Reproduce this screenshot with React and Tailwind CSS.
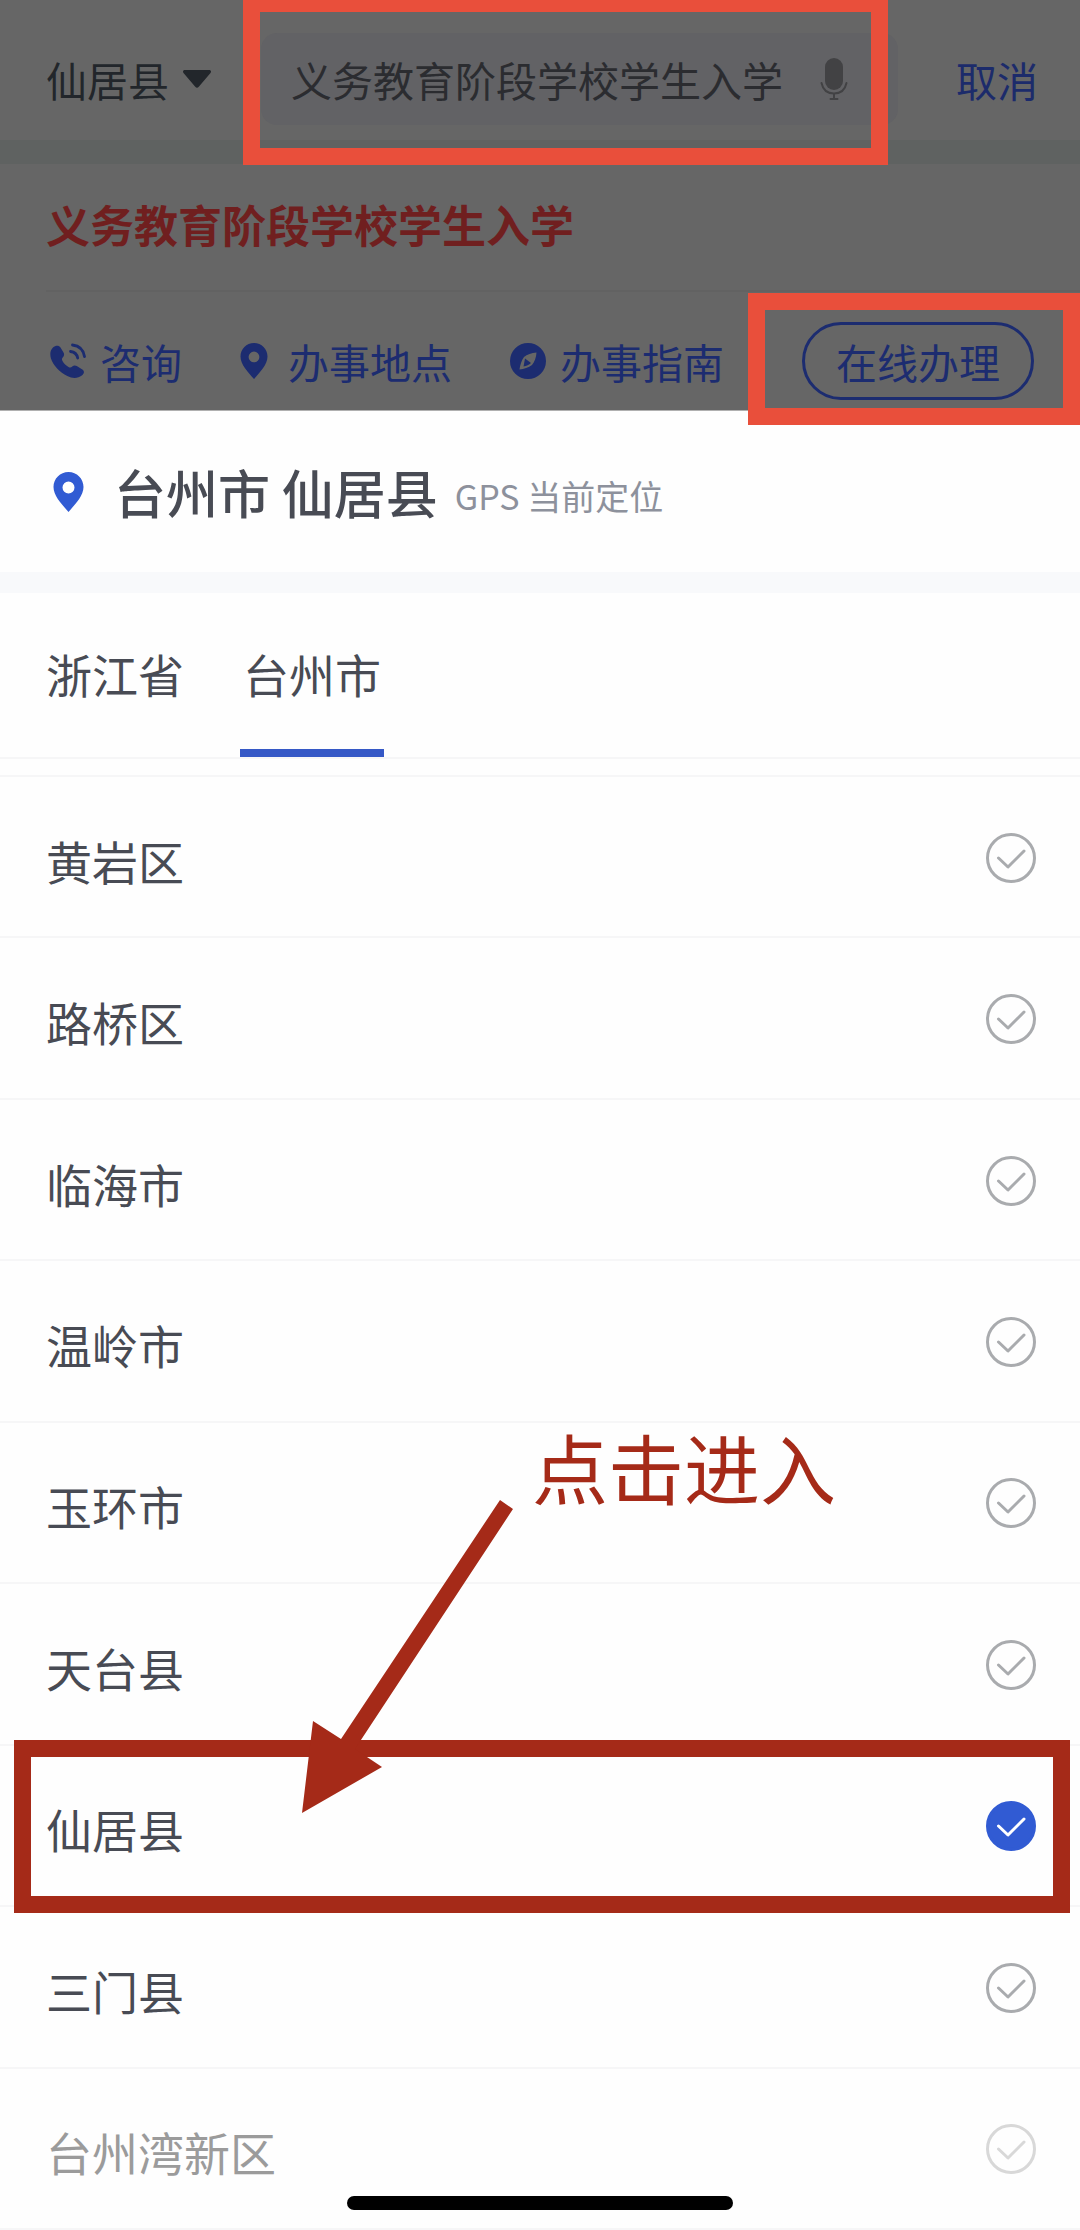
import { useState } from 'react';

const areas = [
  { name: '黄岩区' },
  { name: '路桥区' },
  { name: '临海市' },
  { name: '温岭市' },
  { name: '玉环市' },
  { name: '天台县' },
  { name: '仙居县' },
  { name: '三门县' },
  { name: '台州湾新区', faded: true },
];

const PinIcon = ({ className }) => (
  <svg viewBox="0 0 30 40" className={className} fill="currentColor" aria-hidden="true">
    <path
      fillRule="evenodd"
      d="M15 0C6.6 0 0 6.700 0 15c0 9 8.500 17.500 15 25 6.500-7.500 15-16 15-25C30 6.700 23.400 0 15 0Zm0 9.500a6 6 0 1 1 0 12 6 6 0 0 1 0-12Z"
    />
  </svg>
);

const PhoneIcon = ({ className }) => (
  <svg viewBox="0 0 36 36" className={className} aria-hidden="true">
    <path
      fill="currentColor"
      d="M3 4.500C5.500 2 9 2 10.500 4.500l3 5c1 1.700.7 3.300-.6 4.700-1.200 1.300-1.200 2.300-.4 3.800 1.500 2.700 3.500 4.600 6 6 1.500.8 2.600.7 3.700-.4 1.400-1.300 3-1.600 4.600-.6l5.500 3.400c2.500 1.600 2 4.300-.5 6.200-4 3-9.500 3-14.500.4C10 29.500 3 22.500.8 15-.2 10.500.3 7 3 4.500Z"
    />
    <g fill="none" stroke="currentColor" strokeWidth="2.800" strokeLinecap="round">
      <path d="M22.500 2c6.500.8 11 5 12 11.500" />
      <path d="M20.500 8.500c4 .5 6.500 2.800 7.200 6.500" />
    </g>
  </svg>
);

const CompassIcon = ({ className }) => (
  <svg viewBox="0 0 36 36" className={className} fill="currentColor" aria-hidden="true">
    <path
      fillRule="evenodd"
      d="M18 0a18 18 0 1 1 0 36 18 18 0 0 1 0-36Zm8.500 9.500c-5 .3-9.500 2-12.500 4.500-2.500 3.500-4 8-4.500 12.500 4.500-.5 9-2 12.500-4.500 2.500-3 4.200-7.500 4.500-12.500Z"
    />
    <path d="M15 15.500l6 4.500c-2 1.800-4.500 3-7.500 3.500Z" />
  </svg>
);

const MicIcon = ({ className }) => (
  <svg viewBox="0 0 28 42" className={className} aria-hidden="true">
    <rect x="5" y="0" width="18" height="32" rx="9" fill="currentColor" />
    <path
      d="M1.500 25c1.500 7 6 10.500 12.500 10.500S25 32 26.500 25M14 35.500V41M10.500 41h7"
      fill="none"
      stroke="currentColor"
      strokeWidth="2"
      strokeLinecap="round"
    />
  </svg>
);

const CheckCircle = ({ selected, faded }) => {
  const color = selected ? 'text-[#315bd3]' : faded ? 'text-[#d8d8d8]' : 'text-[#a9abae]';
  return (
    <svg viewBox="0 0 50 50" className={`size-[50px] shrink-0 ${color}`} fill="none" aria-hidden="true">
      <circle cx="25" cy="25" r="23.500" stroke="currentColor" strokeWidth="3" fill={selected ? 'currentColor' : 'none'} />
      <path
        d="M12.500 25l9.500 9L38 18"
        stroke={selected ? '#fff' : 'currentColor'}
        strokeWidth="3"
        strokeLinecap="round"
        strokeLinejoin="round"
      />
    </svg>
  );
};

// Red hint with the arrow that points at the selected row
const ClickHint = () => (
  <div className="pointer-events-none absolute bottom-full left-[300px] z-10 text-[#a52a18]">
    <svg viewBox="0 0 214 314" className="absolute left-0 top-[84px] h-[314px] w-[214px]" fill="currentColor" aria-hidden="true">
      <path d="M200 0l13 9L55 249l27 18-80 46L13 221l28 18Z" />
    </svg>
    <p className="mb-[230px] ml-[232px] whitespace-nowrap text-[76px] leading-[100px]">点击进入</p>
  </div>
);

const AreaRow = ({ area, selected, onSelect }) => (
  <li className="relative flex min-h-[120px] flex-1 border-b-2 border-[#f6f6f7]">
    <button
      type="button"
      aria-pressed={selected}
      onClick={() => onSelect(area.name)}
      className="flex flex-1 items-center justify-between pl-[46px] pr-[44px] pt-[2px] text-left"
    >
      <span className={`pt-1 text-[46px] leading-[68px] ${area.faded ? 'text-[#9b9b9b]' : 'text-[#484b54]'}`}>
        {area.name}
      </span>
      <CheckCircle selected={selected} faded={area.faded} />
    </button>
    {selected && (
      <>
        <div className="pointer-events-none absolute -bottom-2 -top-1.5 left-[14px] right-[10px] border-[17px] border-[#a52a18]" />
        <ClickHint />
      </>
    )}
  </li>
);

const ServiceHeader = () => (
  <div className="bg-[#666666]">
    <div className="flex h-[140px] items-center pb-[16px] pt-[34px]">
      <button type="button" className="ml-[46px] flex shrink-0 items-center gap-[14px] text-[41px] leading-[60px] text-[#22262b]">
        仙居县
        <svg viewBox="0 0 28 18" className="h-[18px] w-[28px]" fill="currentColor" aria-hidden="true">
          <path d="M2 0h24c2 0 2.500 1.500 1.500 3L16 16.500c-1.500 1.800-2.500 1.800-4 0L.500 3C-.500 1.500 0 0 2 0Z" />
        </svg>
      </button>
      <div className="relative ml-[50px] flex h-[92px] flex-1 items-center rounded-2xl bg-[#626265] pl-[30px] pr-[50px]">
        <input
          type="text"
          aria-label="搜索"
          defaultValue="义务教育阶段学校学生入学"
          className="min-w-0 flex-1 bg-transparent text-[41px] leading-[60px] text-[#2b2c30] outline-none"
        />
        <button type="button" aria-label="语音输入" className="text-[#424244]">
          <MicIcon className="h-[42px] w-[28px]" />
        </button>
        <div className="pointer-events-none absolute -bottom-[40px] -left-[18px] -top-[38px] right-[10px] border-[17px] border-[#e94f3b]" />
      </div>
      <button type="button" className="ml-[58px] mr-[42px] shrink-0 text-[41px] leading-[60px] text-[#1c2b6b]">
        取消
      </button>
    </div>
    <div className="h-6 bg-[#5f6261]" />
    <h1 className="ml-[46px] border-b-2 border-[#626262] pb-[34px] pt-[28px] text-[44px] font-bold leading-[64px] text-[#701f1f]">
      义务教育阶段学校学生入学
    </h1>
    <div className="flex h-[118px] items-center justify-between pl-[50px] pt-5 text-[41px] leading-[60px] text-[#1c2c70]">
      <a href="#consult" className="flex items-center gap-[14px]">
        <PhoneIcon className="size-9" />
        咨询
      </a>
      <a href="#place" className="flex items-center gap-5">
        <PinIcon className="h-[36px] w-[28px]" />
        办事地点
      </a>
      <a href="#guide" className="flex items-center gap-[14px]">
        <CompassIcon className="size-9" />
        办事指南
      </a>
      <div className="relative pl-5 pr-[46px]">
        <button type="button" className="h-[78px] rounded-full border-[3px] border-current px-[31px]">
          在线办理
        </button>
        <div className="pointer-events-none absolute -bottom-[25px] -left-[34px] -top-[29px] right-0 border-[17px] border-[#e94f3b]" />
      </div>
    </div>
  </div>
);

export default function App() {
  const [selected, setSelected] = useState('仙居县');

  return (
    <div className="relative flex min-h-screen flex-col bg-[#fefefe] font-['Noto_Sans_CJK_SC',sans-serif]">
      <ServiceHeader />

      <div className="flex h-[162px] items-center border-t border-[#b0b0b0] pl-[53px]">
        <PinIcon className="h-[40px] w-[31px] text-[#315bd3]" />
        <p className="ml-[30px] text-[52px] font-medium leading-[76px] text-[#484b54]">台州市 仙居县</p>
        <p className="ml-[17px] pt-2 text-[34px] leading-[50px] text-[#8d919c]">GPS 当前定位</p>
      </div>
      <div className="h-[21px] bg-[#f8f9fb]" />

      <nav className="flex h-[166px] gap-[56px] border-b-2 border-[#f6f6f7] pl-[46px] text-[46px] leading-[68px] text-[#484b54]">
        <button type="button" className="border-b-[8px] border-transparent pt-1">浙江省</button>
        <button type="button" className="border-b-[8px] border-[#3558c6] px-[3px] pt-1">台州市</button>
      </nav>

      <ul className="mt-4 flex flex-1 flex-col border-t-2 border-[#f6f6f7]">
        {areas.map((area) => (
          <AreaRow key={area.name} area={area} selected={selected === area.name} onSelect={setSelected} />
        ))}
      </ul>

      <div className="absolute bottom-5 left-1/2 h-[14px] w-[386px] -translate-x-1/2 rounded-full bg-black" />
    </div>
  );
}
